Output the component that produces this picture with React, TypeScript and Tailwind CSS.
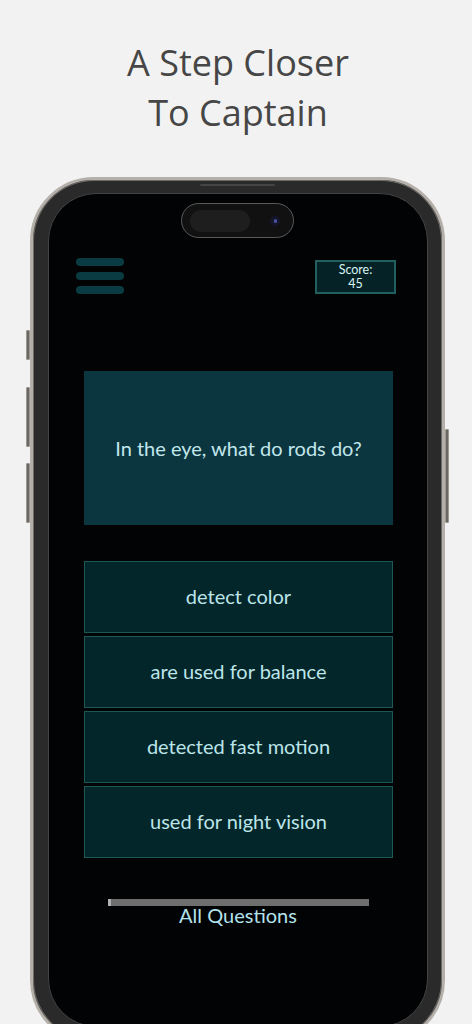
import React from "react";

const answers = [
  "detect color",
  "are used for balance",
  "detected fast motion",
  "used for night vision",
];

function SideButton({ className }: { className: string }) {
  return (
    <div
      className={
        "absolute w-[4px] rounded-[1px] border border-[#9c9790] bg-[#6b6864] " + className
      }
    />
  );
}

export default function App() {
  return (
    <div className="h-[1024px] w-full overflow-hidden bg-[#f2f2f2]">
      <h1 className="pt-[38px] pl-[4px] text-center text-[36px] leading-[50px] font-normal text-[#464646] [font-family:'Open_Sans',sans-serif]">
        A Step Closer
        <br />
        To Captain
      </h1>

      {/* phone */}
      <div className="relative mt-[39px] ml-[30px] h-[867px] w-[415px] rounded-[64px] border-[3px] border-[#b4afa8] bg-[#2a2a2a] pt-[13px] pr-[14px] pb-[14px] pl-[15px] shadow-[inset_0_0_0_1px_#6d6b68]">
        <SideButton className="top-[150px] -left-[7px] h-[30px]" />
        <SideButton className="top-[207px] -left-[7px] h-[60px]" />
        <SideButton className="top-[283px] -left-[7px] h-[60px]" />
        <SideButton className="top-[249px] -right-[7px] h-[94px]" />
        <div className="absolute top-[4px] left-[167px] h-[2px] w-[75px] rounded-full bg-[#454545]" />

        <div className="relative h-full rounded-[48px] border border-[#444] bg-[#020304] [font-family:Lato,sans-serif]">
          {/* dynamic island */}
          <div className="absolute top-[9px] left-[132px] flex h-[35px] w-[113px] items-center justify-end rounded-full border border-[#5a5a5a] bg-[#111] pr-[13px]">
            <div className="absolute top-[6px] left-[8px] h-[22px] w-[60px] rounded-full bg-[#1e1e1e]" />
            <div className="h-[10px] w-[10px] rounded-full bg-[#1b1d3a] shadow-[inset_0_0_0_3px_#151528]">
              <div className="mx-auto mt-[3px] h-[4px] w-[3px] rounded-full bg-[#4a52a0]" />
            </div>
          </div>

          <div className="flex items-start justify-between pt-[64px] pr-[31px] pl-[27px]">
            <div className="flex flex-col gap-[6px]">
              <div className="h-[8px] w-[48px] rounded-full bg-[#0a3a42]" />
              <div className="h-[8px] w-[48px] rounded-full bg-[#0a3a42]" />
              <div className="h-[8px] w-[48px] rounded-full bg-[#0a3a42]" />
            </div>
            <div className="mt-[2px] flex h-[34px] w-[81px] flex-col items-center justify-center border-2 border-[#22605f] bg-[#052326] text-[12.5px] leading-[14px] text-[#d8f3f5]">
              <span>Score:</span>
              <span>45</span>
            </div>
          </div>

          <div className="mt-[77px] ml-[35px] flex h-[154px] w-[309px] items-center justify-center bg-[#0b3640] text-[20px] text-[#c2e7eb]">
            In the eye, what do rods do?
          </div>

          <div className="mt-[36px] ml-[35px] flex w-[309px] flex-col gap-[3px]">
            {answers.map((a) => (
              <div
                key={a}
                className="flex h-[72px] items-center justify-center border border-[#1d5756] bg-[#03262a] pb-[2px] text-[20px] text-[#bce5e9]"
              >
                {a}
              </div>
            ))}
          </div>

          <div className="mx-auto mt-[41px] flex h-[7px] w-[261px] bg-[#6e6e6e]">
            <div className="h-full w-[3px] bg-[#b0b0b0]" />
          </div>
          <div className="-mt-[2px] text-center text-[20px] leading-[22px] text-[#b3e2ec]">All Questions</div>
        </div>
      </div>
    </div>
  );
}
